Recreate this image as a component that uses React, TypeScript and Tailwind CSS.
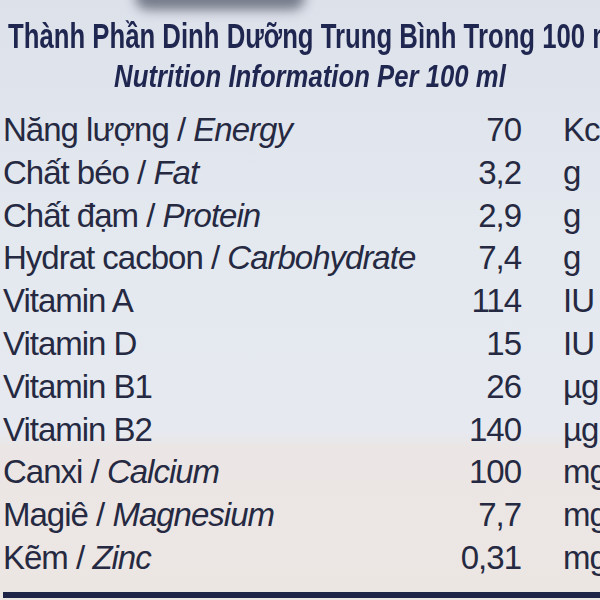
const ROWS = [
  { vi: 'Năng lượng', en: 'Energy', value: '70', unit: 'Kcal' },
  { vi: 'Chất béo', en: 'Fat', value: '3,2', unit: 'g' },
  { vi: 'Chất đạm', en: 'Protein', value: '2,9', unit: 'g' },
  { vi: 'Hydrat cacbon', en: 'Carbohydrate', value: '7,4', unit: 'g' },
  { vi: 'Vitamin A', value: '114', unit: 'IU' },
  { vi: 'Vitamin D', value: '15', unit: 'IU' },
  { vi: 'Vitamin B1', value: '26', unit: 'µg' },
  { vi: 'Vitamin B2', value: '140', unit: 'µg' },
  { vi: 'Canxi', en: 'Calcium', value: '100', unit: 'mg' },
  { vi: 'Magiê', en: 'Magnesium', value: '7,7', unit: 'mg' },
  { vi: 'Kẽm', en: 'Zinc', value: '0,31', unit: 'mg' },
]

export default function App() {
  return (
    <div
      className="relative w-[600px] h-[600px] overflow-hidden bg-[linear-gradient(180deg,#dde1ea_0%,#e4e8ef_40%,#e6e9f0_72%,#ebe6e5_74.5%,#ece6e3_100%)] text-[#252941]"
      style={{ fontFamily: '"Liberation Sans", Arial, sans-serif' }}
    >
      {/* blurred shape at the top edge of the photo */}
      <div className="absolute top-[-16px] left-[135px] w-[170px] h-[26px] rounded-full bg-[#4b5163] opacity-70 blur-[6px]" />

      {/* Heading */}
      <div className="pt-[16px] whitespace-nowrap text-[#1f2650]">
        <div className="pl-[8px] h-[40px] leading-[40px]">
          <span className="inline-block origin-left scale-x-[0.735] text-[35px] font-bold">
            Thành Phần Dinh Dưỡng Trung Bình Trong 100 ml
          </span>
        </div>
        <div className="flex justify-center pl-[20px] h-[42px] leading-[42px]">
          <span className="inline-block origin-center scale-x-[0.83] text-[31px] font-bold italic">
            Nutrition Information Per 100 ml
          </span>
        </div>
      </div>

      {/* Rows */}
      <div className="mt-[11px] pl-[3px]">
        {ROWS.map((row) => (
          <div
            key={row.vi}
            className="flex h-[42.8px] leading-[42.8px] text-[33px] tracking-[-1px] whitespace-nowrap"
          >
            <div className="flex-1 min-w-0">
              {row.vi}
              {row.en && (
                <>
                  {' / '}
                  <span className="italic">{row.en}</span>
                </>
              )}
            </div>
            <div className="w-[120px] shrink-0 text-right">{row.value}</div>
            <div className="ml-[42px] w-[37px] shrink-0">{row.unit}</div>
          </div>
        ))}
      </div>

      {/* bottom rule */}
      <div className="mt-[12px] ml-[3px] h-[6px] bg-[#1e2446]" />
    </div>
  )
}
